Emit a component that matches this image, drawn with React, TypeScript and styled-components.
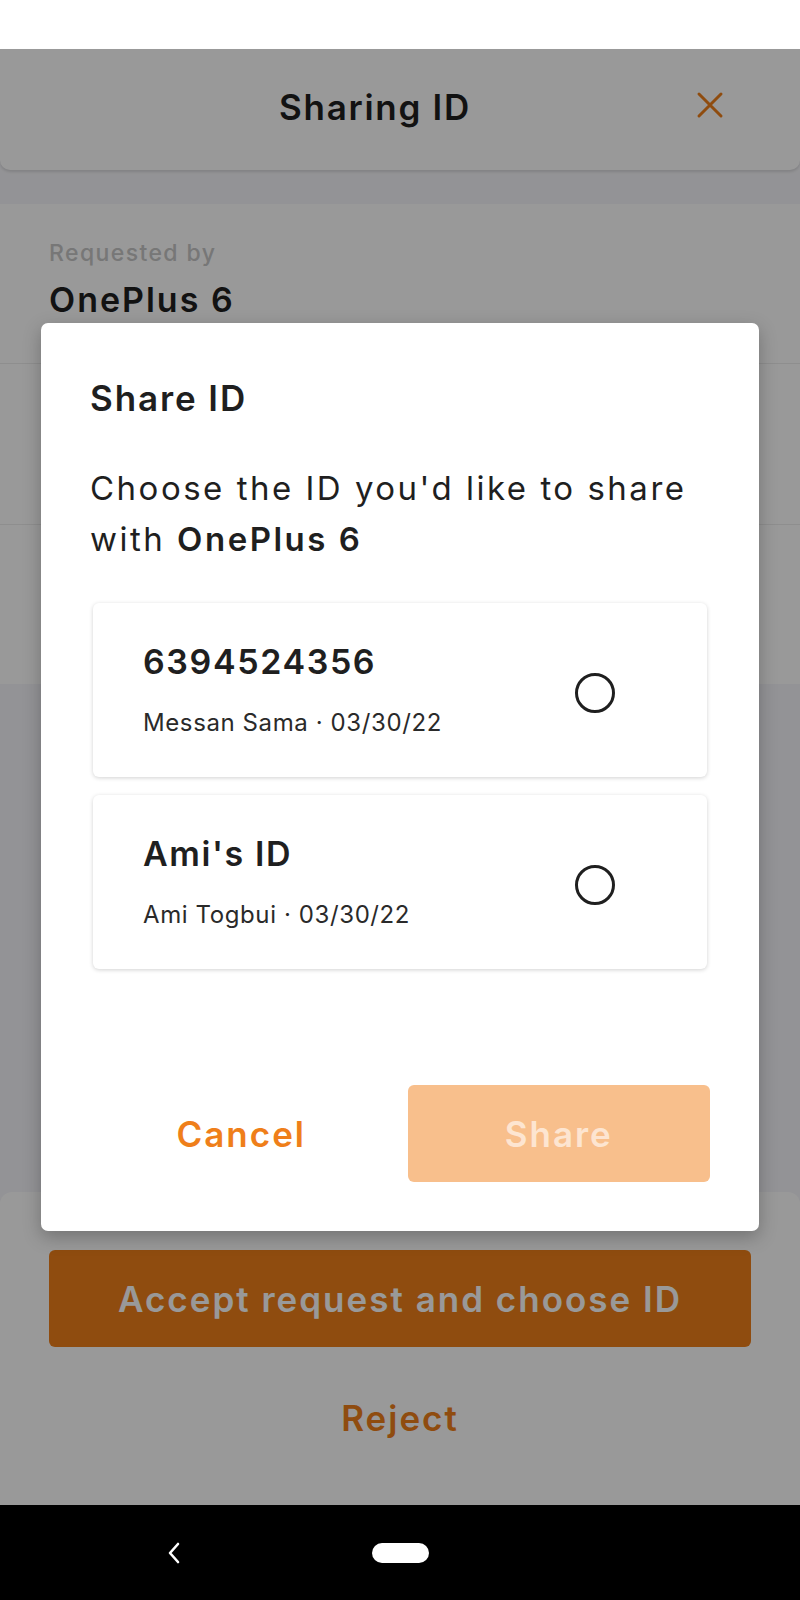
import React from 'react'
import styled, { createGlobalStyle } from 'styled-components'

const GlobalStyle = createGlobalStyle`
   html, body {
      margin: 0;
      padding: 0;
      background: #ffffff;
   }

   body {
      font-family: Inter, "Noto Sans", "Liberation Sans", sans-serif;
      color: #1f1f1f;
   }

   * {
      box-sizing: border-box;
   }
`

const ORANGE = '#ef7f1a'

type IdOption = {
   id: string;
   title: string;
   owner: string;
   date: string;
}

const options: IdOption[] = [
   { id: 'a', title: '6394524356', owner: 'Messan Sama', date: '03/30/22' },
   { id: 'b', title: "Ami's ID", owner: 'Ami Togbui', date: '03/30/22' },
]

const Screen = styled.div`
   width: 800px;
   height: 1600px;
   display: flex;
   flex-direction: column;
   overflow: hidden;
`

const StatusBar = styled.div`
   height: 49px;
   flex-shrink: 0;
   background: #ffffff;
`

const AppArea = styled.main`
   position: relative;
   flex: 1;
   display: flex;
   flex-direction: column;
   background: #f6f6fa;
`

const Header = styled.header`
   position: relative;
   height: 121px;
   flex-shrink: 0;
   padding-bottom: 6px;
   display: flex;
   align-items: center;
   background: #ffffff;
   border-radius: 0 0 10px 10px;
   box-shadow: 0 2px 3px rgba(0, 0, 0, 0.12);
`

const HeaderTitle = styled.h1`
   flex: 1;
   margin: 0;
   padding-right: 50px;
   text-align: center;
   font-size: 35px;
   font-weight: 600;
   letter-spacing: 1.7px;
   color: #1f1f1f;
`

const CloseButton = styled.button`
   position: absolute;
   right: 70px;
   top: 36px;
   width: 40px;
   height: 40px;
   padding: 0;
   border: none;
   background: transparent;
   display: flex;
   align-items: center;
   justify-content: center;
`

const DetailsCard = styled.section`
   margin-top: 34px;
   background: #ffffff;
`

const DetailSection = styled.div<{ $height: number }>`
   height: ${props => props.$height}px;
   padding: 0 49px 8px;
   display: flex;
   flex-direction: column;
   justify-content: center;
   gap: 12px;

   &:not(:last-child) {
      border-bottom: 1px solid #ededed;
   }
`

const DetailLabel = styled.span`
   font-size: 23px;
   font-weight: 500;
   color: #c6c6c6;
   letter-spacing: 1.4px;
`

const DetailValue = styled.span`
   font-size: 34px;
   font-weight: 600;
   letter-spacing: 2px;
   color: #1f1f1f;
`

const Spacer = styled.div`
   flex: 1;
`

const BottomPanel = styled.section`
   flex-shrink: 0;
   height: 313px;
   padding: 58px 49px 0;
   display: flex;
   flex-direction: column;
   align-items: stretch;
   background: #ffffff;
   border-radius: 12px 12px 0 0;
`

const PrimaryButton = styled.button`
   height: 97px;
   border: none;
   border-radius: 6px;
   background: ${ORANGE};
   color: #ffffff;
   font-family: inherit;
   font-size: 35px;
   font-weight: 600;
   letter-spacing: 2px;
`

const TextButton = styled.button`
   height: 97px;
   margin-top: 22px;
   border: none;
   background: transparent;
   color: ${ORANGE};
   font-family: inherit;
   font-size: 35px;
   font-weight: 600;
   letter-spacing: 2px;
`

const Backdrop = styled.div`
   position: absolute;
   inset: 0;
   display: flex;
   align-items: center;
   justify-content: center;
   background: rgba(0, 0, 0, 0.4);
`

const Dialog = styled.div`
   width: 718px;
   padding: 53px 49px 49px;
   background: #ffffff;
   border-radius: 7px;
   box-shadow: 0 6px 18px rgba(0, 0, 0, 0.25);
`

const DialogTitle = styled.h2`
   margin: 0;
   line-height: 44px;
   font-size: 35px;
   font-weight: 600;
   letter-spacing: 1.9px;
   color: #1f1f1f;
`

const DialogText = styled.p`
   margin: 43px 0 38px;
   line-height: 51px;
   font-size: 33px;
   font-weight: 400;
   letter-spacing: 2.5px;
   color: #1f1f1f;

   strong {
      font-weight: 600;
   }
`

const OptionList = styled.div`
   display: flex;
   flex-direction: column;
   gap: 18px;
   padding: 0 3px;
`

const OptionCard = styled.label`
   height: 174px;
   padding: 0 92px 0 50px;
   display: flex;
   align-items: center;
   justify-content: space-between;
   background: #ffffff;
   border-radius: 6px;
   box-shadow: 0 1px 4px rgba(0, 0, 0, 0.18);
`

const OptionText = styled.div`
   display: flex;
   flex-direction: column;
   gap: 22px;
`

const OptionTitle = styled.span`
   line-height: 44px;
   font-size: 34px;
   font-weight: 600;
   letter-spacing: 1.6px;
   color: #1f1f1f;
`

const OptionMeta = styled.span`
   line-height: 34px;
   font-size: 24px;
   font-weight: 400;
   letter-spacing: 0.6px;
   color: #2a2a2a;
`

const Radio = styled.span<{ $checked: boolean }>`
   width: 40px;
   height: 40px;
   border-radius: 50%;
   border: 3.3px solid #1f1f1f;
   background: ${props => props.$checked ? '#1f1f1f' : 'transparent'};
   margin-top: 6px;
`

const DialogActions = styled.div`
   margin-top: 116px;
   display: grid;
   grid-template-columns: 1fr 1fr;
   column-gap: 15px;
`

const ActionButton = styled.button<{ $variant: 'text' | 'filled' }>`
   height: 97px;
   border: none;
   border-radius: 6px;
   font-family: inherit;
   font-size: 35px;
   font-weight: 600;
   letter-spacing: 2px;
   background: ${props => props.$variant === 'filled' ? '#f8bf8c' : 'transparent'};
   color: ${props => props.$variant === 'filled' ? '#fde5d1' : ORANGE};
`

const NavBar = styled.nav`
   height: 95px;
   flex-shrink: 0;
   display: flex;
   align-items: center;
   background: #000000;
`

const BackKey = styled.span`
   margin-left: 167px;
   display: flex;
`

const HomePill = styled.span`
   margin-left: 191px;
   width: 57px;
   height: 20px;
   border-radius: 10px;
   background: #ffffff;
`

export default function App() {
   const [selected] = React.useState<string | null>(null)

   return (
      <>
         <GlobalStyle />
         <Screen>
            <StatusBar />
            <AppArea>
               <Header>
                  <HeaderTitle>Sharing ID</HeaderTitle>
                  <CloseButton aria-label="Close">
                     <svg width="28" height="28" viewBox="0 0 28 28">
                        <path d="M3 3 L25 25 M25 3 L3 25" stroke={ORANGE} strokeWidth="3" strokeLinecap="round" />
                     </svg>
                  </CloseButton>
               </Header>

               <DetailsCard>
                  <DetailSection $height={160}>
                     <DetailLabel>Requested by</DetailLabel>
                     <DetailValue>OnePlus 6</DetailValue>
                  </DetailSection>
                  <DetailSection $height={161} />
                  <DetailSection $height={159} />
               </DetailsCard>

               <Spacer />

               <BottomPanel>
                  <PrimaryButton>Accept request and choose ID</PrimaryButton>
                  <TextButton>Reject</TextButton>
               </BottomPanel>

               <Backdrop>
                  <Dialog role="dialog">
                     <DialogTitle>Share ID</DialogTitle>
                     <DialogText>
                        Choose the ID you'd like to share<br />
                        with <strong>OnePlus 6</strong>
                     </DialogText>
                     <OptionList>
                        {options.map(option => (
                           <OptionCard key={option.id}>
                              <OptionText>
                                 <OptionTitle>{option.title}</OptionTitle>
                                 <OptionMeta>{option.owner} · {option.date}</OptionMeta>
                              </OptionText>
                              <Radio $checked={selected === option.id} />
                           </OptionCard>
                        ))}
                     </OptionList>
                     <DialogActions>
                        <ActionButton $variant="text">Cancel</ActionButton>
                        <ActionButton $variant="filled" disabled>Share</ActionButton>
                     </DialogActions>
                  </Dialog>
               </Backdrop>
            </AppArea>
            <NavBar>
               <BackKey>
                  <svg width="14" height="22" viewBox="0 0 14 22">
                     <path d="M11 2 L3 11 L11 20" stroke="#ffffff" strokeWidth="2.6" fill="none" strokeLinecap="round" strokeLinejoin="round" />
                  </svg>
               </BackKey>
               <HomePill />
            </NavBar>
         </Screen>
      </>
   )
}
